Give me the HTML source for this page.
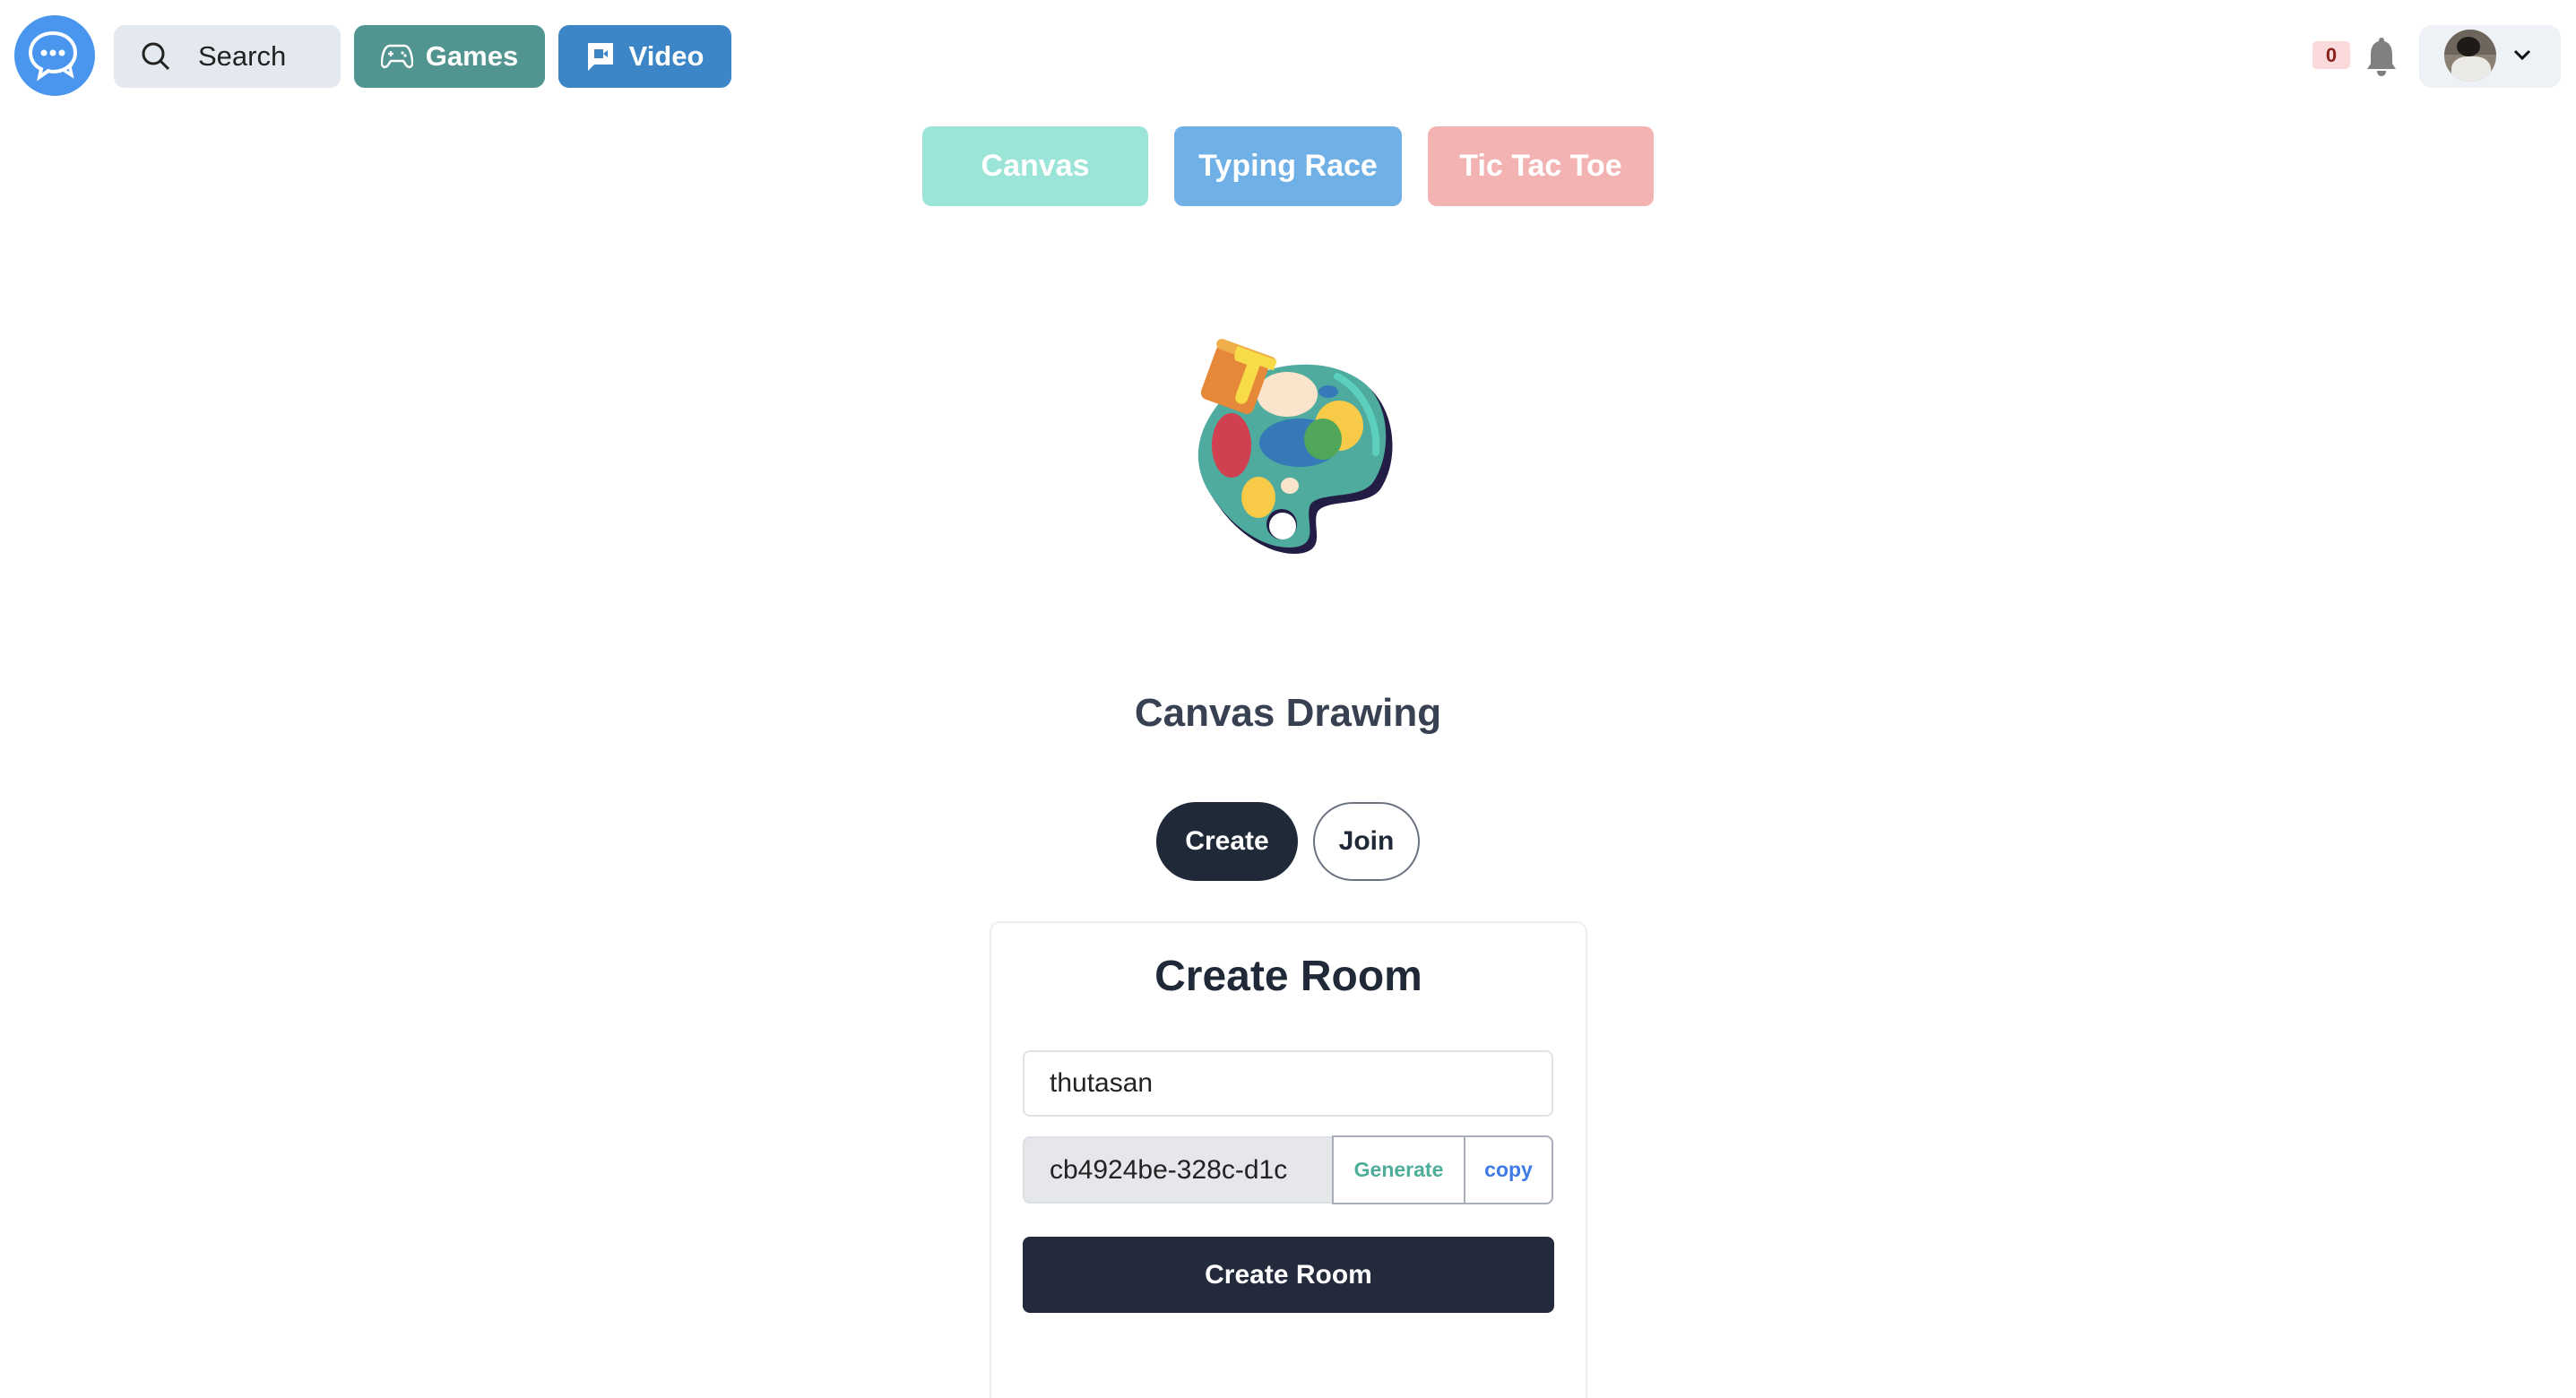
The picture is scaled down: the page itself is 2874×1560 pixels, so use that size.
<!DOCTYPE html>
<html><head><meta charset="utf-8"><style>
*{box-sizing:border-box;margin:0;padding:0}
html,body{width:2874px;height:1560px;overflow:hidden}
body{background:#fff;font-family:"Liberation Sans",sans-serif;position:relative;color:#1f2937}
.a{position:absolute}
.btn{position:absolute;display:flex;align-items:center;justify-content:center;border-radius:12px;font-weight:bold}
</style></head><body>
<div class="a" style="left:16px;top:17px;width:90px;height:90px;border-radius:50%;background:#4a96ee"></div>
<svg class="a" style="left:16px;top:17px" width="90" height="90" viewBox="0 0 90 90">
<path d="M57 33 C66 38 68 50 62 58 L64 67 L56 62" fill="none" stroke="#fff" stroke-width="3.5"/>
<path d="M43 20 C28 20 18 30 18 42 C18 50 23 57 30 60 L28 69 L38 62 C40 63 42 63 43 63 C58 63 68 53 68 42 C68 30 58 20 43 20Z" fill="#4a96ee" stroke="#fff" stroke-width="4"/>
<circle cx="33" cy="42" r="3.5" fill="#fff"/><circle cx="43" cy="42" r="3.5" fill="#fff"/><circle cx="53" cy="42" r="3.5" fill="#fff"/>
</svg>
<div class="btn" style="left:127px;top:28px;width:253px;height:70px;background:#e4e8ef;justify-content:flex-start;font-weight:normal;color:#222;font-size:31px">
<svg style="margin-left:30px;margin-right:30px" width="34" height="34" viewBox="0 0 34 34"><circle cx="14" cy="14" r="11" fill="none" stroke="#222" stroke-width="3"/><path d="M22 22 L31 31" stroke="#222" stroke-width="3"/></svg>Search</div>
<div class="btn" style="left:395px;top:28px;width:213px;height:70px;background:#52948f;color:#fff;font-size:31px">
<svg style="margin-right:14px" width="36" height="30" viewBox="0 0 36 30"><path d="M10 3 H26 C31 3 34 10 35 20 C36 28 30 29 27 23 L25 20 H11 L9 23 C6 29 0 28 1 20 C2 10 5 3 10 3Z" fill="none" stroke="#fff" stroke-width="2.5"/><path d="M8 12 H14 M11 9 V15" stroke="#fff" stroke-width="2.2"/><circle cx="24" cy="11" r="1.6" fill="#fff"/><circle cx="27" cy="14" r="1.6" fill="#fff"/></svg>Games</div>
<div class="btn" style="left:623px;top:28px;width:193px;height:70px;background:#3c85c6;color:#fff;font-size:31px">
<svg style="margin-right:16px" width="32" height="34" viewBox="0 0 32 34"><path d="M2 2 H30 V26 H9 L2 33Z" fill="#fff"/><rect x="9" y="9" width="10" height="10" fill="#3c85c6"/><path d="M19 14 L24 10 V18Z" fill="#3c85c6"/></svg>Video</div>
<div class="btn" style="left:2580px;top:46px;width:42px;height:31px;border-radius:5px;background:#fadadb;color:#8b2020;font-size:22px">0</div>
<svg class="a" style="left:2634px;top:40px" width="46" height="46" viewBox="0 0 46 46"><path d="M23 2 C26 2 26 5 26 6 C33 8 35 14 35 22 V31 L39 37 H7 L11 31 V22 C11 14 13 8 20 6 C20 5 20 2 23 2Z" fill="#808080"/><path d="M18 39 H28 C28 43 26 45 23 45 C20 45 18 43 18 39Z" fill="#808080"/></svg>
<div class="a" style="left:2699px;top:28px;width:158px;height:70px;border-radius:14px;background:#eef1f6"></div>
<div class="a" style="left:2727px;top:33px;width:58px;height:58px;border-radius:50%;overflow:hidden;background:#8a8074">
<div class="a" style="left:0;top:0;width:58px;height:28px;background:#6e665c"></div>
<div class="a" style="left:14px;top:8px;width:26px;height:22px;border-radius:50%;background:#1e1a18"></div>
<div class="a" style="left:8px;top:30px;width:44px;height:34px;border-radius:40% 40% 0 0;background:#eceae6"></div>
</div>
<svg class="a" style="left:2803px;top:54px" width="22" height="14" viewBox="0 0 22 14"><path d="M3 3 L11 11 L19 3" fill="none" stroke="#111" stroke-width="3"/></svg>
<div class="btn" style="left:1029px;top:141px;width:252px;height:89px;background:#9be4d8;color:#fff;font-size:34px;border-radius:10px;font-weight:600">Canvas</div>
<div class="btn" style="left:1310px;top:141px;width:254px;height:89px;background:#6fb0e6;color:#fff;font-size:34px;border-radius:10px;font-weight:600">Typing Race</div>
<div class="btn" style="left:1593px;top:141px;width:252px;height:89px;background:#f4b3b3;color:#fff;font-size:34px;border-radius:10px;font-weight:600">Tic Tac Toe</div>
<svg class="a" style="left:1300px;top:360px" width="280" height="280" viewBox="0 0 280 280">
<path d="M64 94 C94 49 184 34 229 74 C259 104 260 156 240 186 C225 206 180 196 170 211 C163 226 180 251 154 257 C124 263 84 240 59 204 C29 164 40 124 64 94Z" fill="#221d45"/>
<path d="M60 90 C90 45 180 30 225 70 C252 96 252 148 232 178 C218 198 172 188 162 203 C155 218 172 244 148 250 C118 256 80 234 55 198 C25 158 36 120 60 90Z" fill="#4eab9e"/>
<circle cx="130" cy="225" r="17" fill="#221d45"/><circle cx="131" cy="227" r="15" fill="#fff"/>
<path d="M192 60 C220 75 238 110 235 145" fill="none" stroke="#5ccfbd" stroke-width="8" stroke-linecap="round"/>
<ellipse cx="136" cy="80" rx="34" ry="25" fill="#fbe4cc"/>
<ellipse cx="182" cy="77" rx="11" ry="7" fill="#3679b9"/>
<ellipse cx="74" cy="137" rx="22" ry="36" fill="#d14051"/>
<ellipse cx="150" cy="134" rx="45" ry="27" fill="#3679b9"/>
<ellipse cx="194" cy="115" rx="27" ry="28" fill="#f7ca48"/>
<ellipse cx="176" cy="130" rx="21" ry="23" fill="#50a75a"/>
<ellipse cx="104" cy="195" rx="19" ry="23" fill="#f7ca48"/>
<ellipse cx="139" cy="182" rx="10" ry="9" fill="#fbe4cc"/>
<g transform="rotate(20 80 60)"><rect x="48" y="32" width="62" height="64" rx="8" fill="#e5883a"/><rect x="46" y="26" width="70" height="12" rx="6" fill="#f0ae4a"/><path d="M70 28 H116 V40 H100 V80 C100 90 86 90 86 80 V44 H74 C68 44 68 28 70 28Z" fill="#f8dc47"/></g>
</svg>
<div class="a" style="left:0;width:2874px;top:771px;text-align:center;font-size:44px;font-weight:600;color:#374151">Canvas Drawing</div>
<div class="btn" style="left:1290px;top:895px;width:158px;height:88px;border-radius:44px;background:#1f2937;color:#fff;font-size:30px">Create</div>
<div class="btn" style="left:1465px;top:895px;width:119px;height:88px;border-radius:44px;background:#fff;border:2px solid #6b7280;color:#1f2937;font-size:30px">Join</div>
<div class="a" style="left:1104px;top:1028px;width:667px;height:532px;border:2px solid #eceef1;border-bottom:none;border-radius:12px 12px 0 0"></div>
<div class="a" style="left:1104px;width:667px;top:1062px;text-align:center;font-size:48px;font-weight:bold;color:#1f2937">Create Room</div>
<div class="a" style="left:1141px;top:1172px;width:592px;height:74px;border:2px solid #e0e2e6;border-radius:8px;font-size:30px;line-height:70px;padding-left:28px;color:#222">thutasan</div>
<div class="a" style="left:1141px;top:1268px;width:345px;height:75px;border:2px solid #dcdfe4;border-right:none;border-radius:8px 0 0 8px;background:#e5e7eb;font-size:30px;line-height:71px;padding-left:28px;color:#222;overflow:hidden;white-space:nowrap">cb4924be-328c-d1c</div>
<div class="btn" style="left:1486px;top:1267px;width:149px;height:77px;border:2px solid #a9afb8;border-radius:0;background:#fff;color:#4fae99;font-size:23px">Generate</div>
<div class="btn" style="left:1633px;top:1267px;width:100px;height:77px;border:2px solid #a9afb8;border-radius:0 8px 8px 0;background:#fff;color:#3d7ae6;font-size:23px">copy</div>
<div class="btn" style="left:1141px;top:1380px;width:593px;height:85px;border-radius:8px;background:#222a3b;color:#fff;font-size:30px">Create Room</div>
</body></html>
